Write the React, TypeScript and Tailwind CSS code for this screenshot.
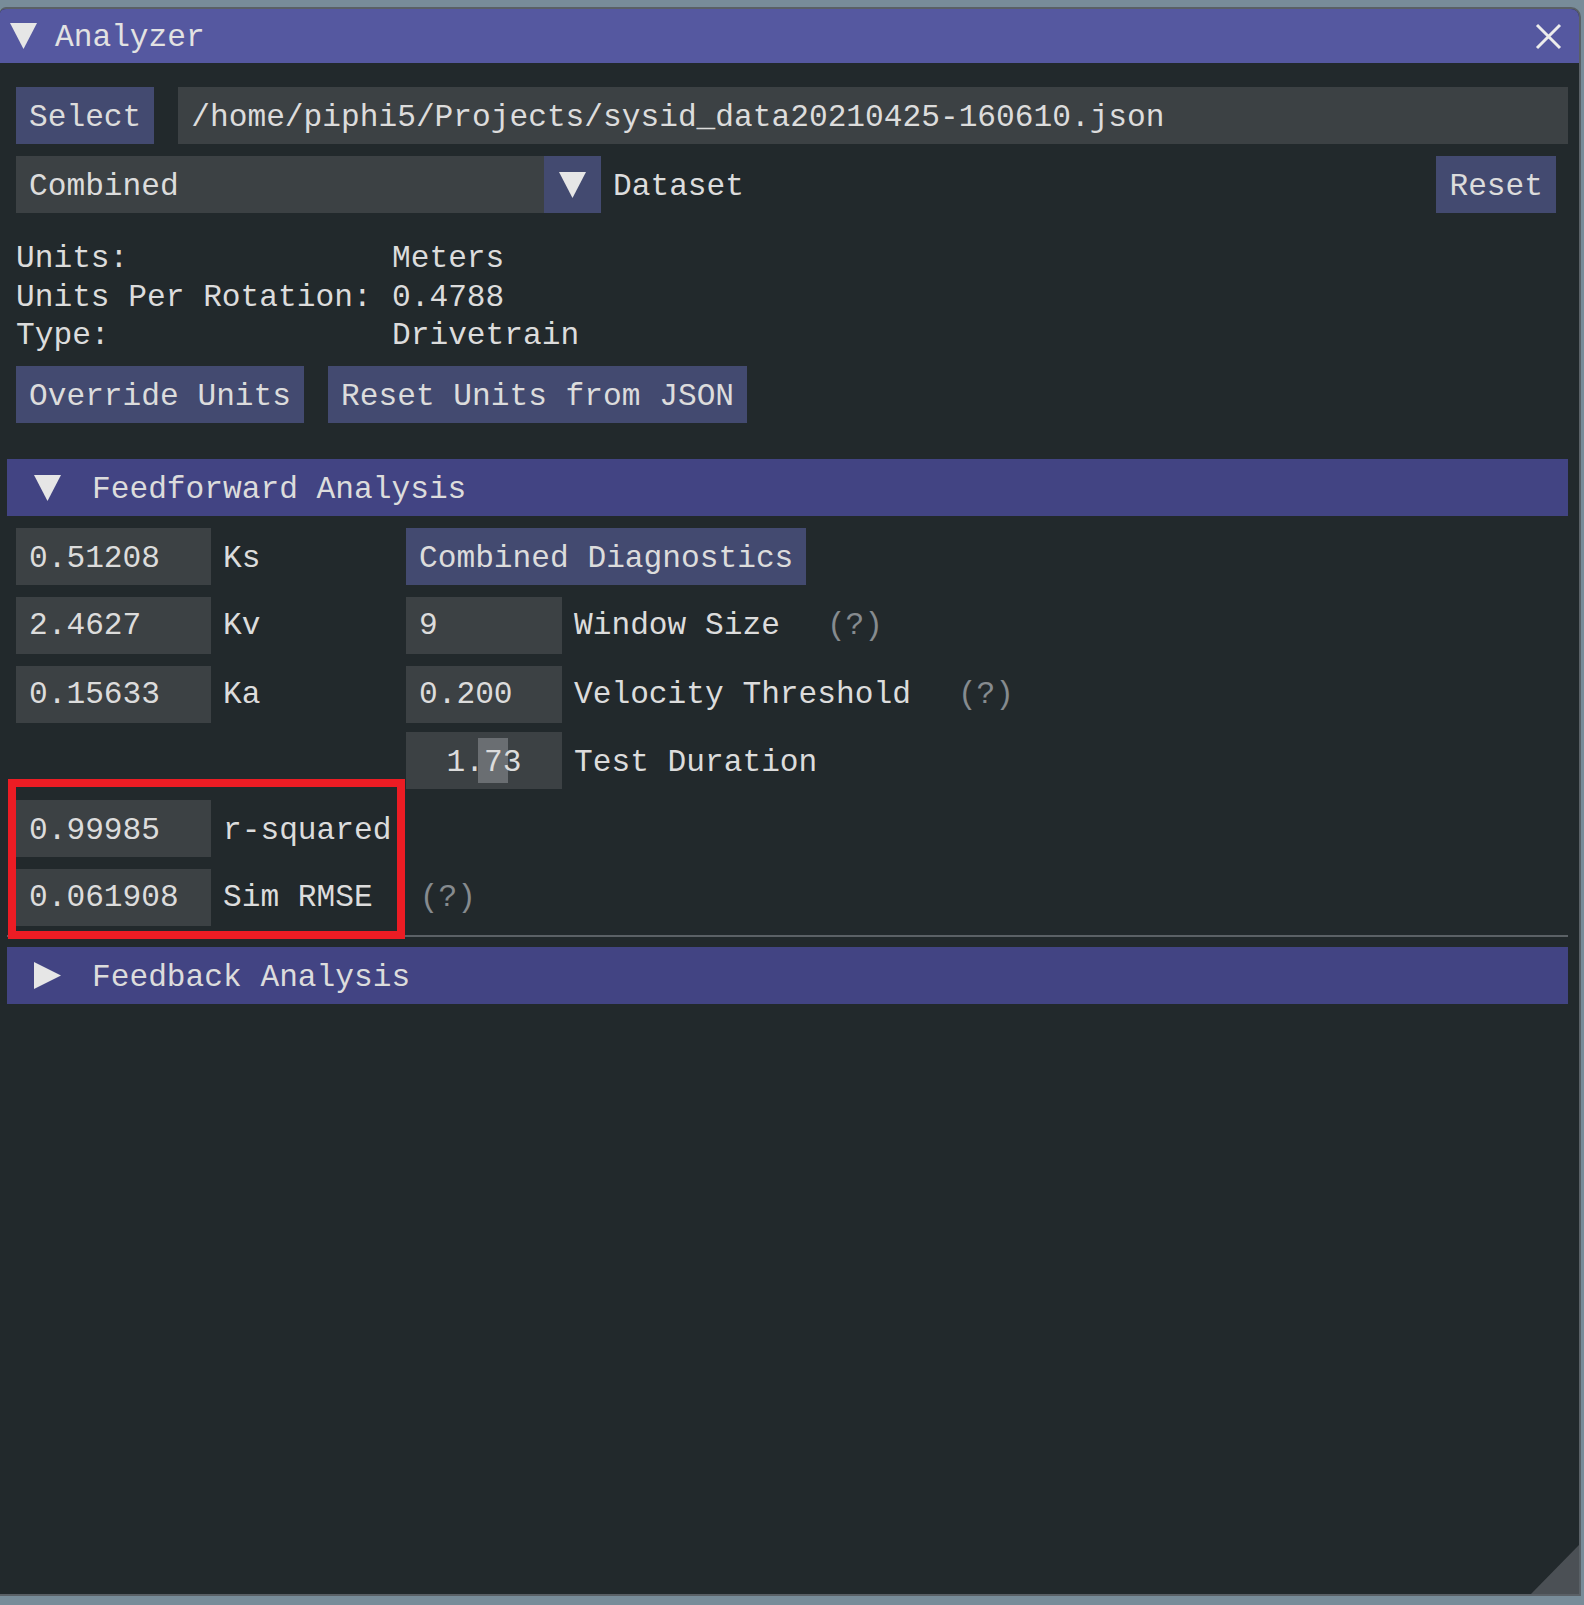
import React from "react";

const frame = "h-[57px] bg-[#3c4144] pl-[13px] pt-[4px] flex items-center";
const frameUp = "h-[57px] bg-[#3c4144] pl-[13px] flex items-center";
const button = "h-[57px] bg-[#434a70] px-[13px] pt-[4px] flex items-center";
const label = "h-[57px] pt-[4px] flex items-center";
const labelUp = "h-[57px] flex items-center";
const help = "h-[57px] flex items-center text-[#868b8f] ml-[47px]";

function DownTriangle({ size = 27 }: { size?: number }) {
  return (
    <svg width={size} height={size - 1} viewBox="0 0 27 26">
      <polygon points="0,0 27,0 13.5,26" fill="#e6e6e6" />
    </svg>
  );
}

function RightTriangle() {
  return (
    <svg width={27} height={27} viewBox="0 0 27 27">
      <polygon points="0,0 27,13.5 0,27" fill="#e6e6e6" />
    </svg>
  );
}

function Header({ open, title }: { open: boolean; title: string }) {
  return (
    <div className="-ml-[9px] h-[57px] bg-[#424483] flex items-center pl-[27px]">
      {open ? <DownTriangle /> : <RightTriangle />}
      <span className="ml-[31px] pt-[4px]">{title}</span>
    </div>
  );
}

export default function App() {
  return (
    <div className="w-[1584px] h-[1605px] bg-[#788c99] pt-[7px] font-['Liberation_Mono',monospace] text-[31.2px] leading-[36px] text-[#dcdcdc] overflow-hidden">
      <div className="relative w-[1581px] h-[1589px] border-2 border-l-0 border-[#5a6066] rounded-tr-[10px] rounded-tl-[6px] bg-[#22292c] overflow-hidden flex flex-col">
        {/* title bar */}
        <div className="h-[54px] bg-[#5558a0] flex items-center pl-[10px] pr-[17px] shrink-0">
          <DownTriangle />
          <span className="ml-[18px] pt-[4px] text-[#e2e2e2]">Analyzer</span>
          <div className="flex-1" />
          <svg width={27} height={27} viewBox="0 0 27 27">
            <path d="M2 2 L25 25 M25 2 L2 25" stroke="#ececec" strokeWidth="3" />
          </svg>
        </div>

        <div className="pl-[16px] pr-[11px] flex flex-col">
          {/* file row */}
          <div className="mt-[24px] flex">
            <div className={button}>Select</div>
            <div className={`${frame} flex-1 ml-[24px]`}>
              /home/piphi5/Projects/sysid_data20210425-160610.json
            </div>
          </div>

          {/* dataset row */}
          <div className="mt-[12px] flex">
            <div className={`${frame} w-[528px]`}>Combined</div>
            <div className="w-[57px] h-[57px] bg-[#434a70] flex items-center justify-center">
              <DownTriangle />
            </div>
            <div className={`${label} ml-[12px]`}>Dataset</div>
            <div className="flex-1" />
            <div className={`${button} mr-[12px]`}>Reset</div>
          </div>

          {/* units info */}
          <div className="mt-[27px] grid grid-cols-[376px_1fr] leading-[38.5px]">
            <span>Units:</span>
            <span>Meters</span>
            <span>Units Per Rotation:</span>
            <span>0.4788</span>
            <span>Type:</span>
            <span>Drivetrain</span>
          </div>

          <div className="mt-[10.5px] flex gap-[24px]">
            <div className={button}>Override Units</div>
            <div className={button}>Reset Units from JSON</div>
          </div>

          {/* feedforward */}
          <div className="mt-[36px]">
            <Header open title="Feedforward Analysis" />
          </div>

          <div className="mt-[12px] flex">
            <div className="w-[390px] flex shrink-0">
              <div className={`${frame} w-[195px]`}>0.51208</div>
              <div className={`${label} ml-[12px]`}>Ks</div>
            </div>
            <div className={button}>Combined Diagnostics</div>
          </div>

          <div className="mt-[12px] flex">
            <div className="w-[390px] flex shrink-0">
              <div className={`${frameUp} w-[195px]`}>2.4627</div>
              <div className={`${labelUp} ml-[12px]`}>Kv</div>
            </div>
            <div className={`${frameUp} w-[156px]`}>9</div>
            <div className={`${labelUp} ml-[12px]`}>Window Size</div>
            <div className={help}>(?)</div>
          </div>

          <div className="mt-[12px] flex">
            <div className="w-[390px] flex shrink-0">
              <div className={`${frameUp} w-[195px]`}>0.15633</div>
              <div className={`${labelUp} ml-[12px]`}>Ka</div>
            </div>
            <div className={`${frameUp} w-[156px]`}>0.200</div>
            <div className={`${labelUp} ml-[12px]`}>Velocity Threshold</div>
            <div className={help}>(?)</div>
          </div>

          <div className="mt-[9px] flex">
            <div className="w-[390px] shrink-0" />
            <div className="relative w-[156px] h-[57px] bg-[#3c4144] pt-[4px] flex items-center justify-center">
              <div className="absolute left-[72px] top-[6px] w-[30px] h-[45px] bg-[#6a6e72]" />
              <span className="relative">1.73</span>
            </div>
            <div className={`${label} ml-[12px]`}>Test Duration</div>
          </div>

          <div className="relative mt-[11px] flex flex-col gap-[12px]">
            <div className="flex">
              <div className={`${frame} w-[195px]`}>0.99985</div>
              <div className={`${label} ml-[12px]`}>r-squared</div>
            </div>
            <div className="flex">
              <div className={`${frameUp} w-[195px]`}>0.061908</div>
              <div className={`${labelUp} ml-[12px]`}>Sim RMSE</div>
              <div className={help}>(?)</div>
            </div>
            <div className="absolute -top-[21px] -left-[8px] w-[397px] h-[160px] border-[8px] border-[#ec1c24] z-10" />
          </div>

          <div className="mt-[9px] -ml-[9px] h-[2px] bg-[#5b6166]" />

          <div className="mt-[10px]">
            <Header open={false} title="Feedback Analysis" />
          </div>
        </div>

        {/* resize grip */}
        <svg className="absolute right-0 bottom-0" width={48} height={49} viewBox="0 0 48 49">
          <polygon points="48,0 48,49 0,49" fill="#4b5055" />
        </svg>
      </div>
    </div>
  );
}
